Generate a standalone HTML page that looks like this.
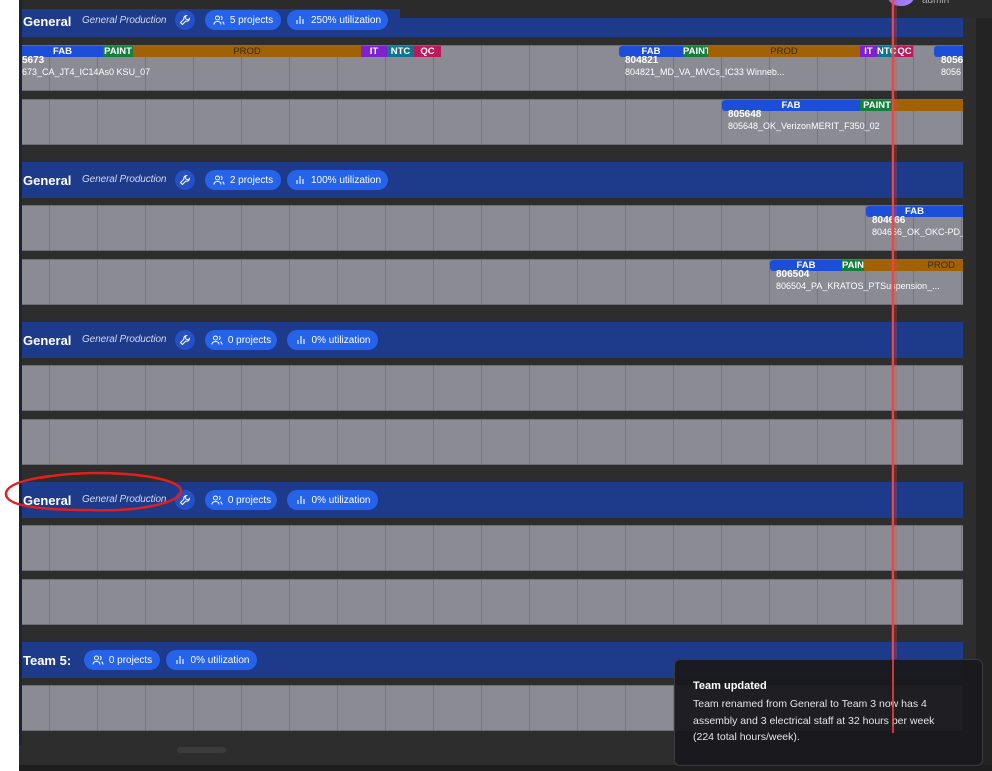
<!DOCTYPE html>
<html><head><style>
*{margin:0;padding:0;box-sizing:border-box}
body{width:992px;height:771px;overflow:hidden;background:#fff;font-family:"Liberation Sans",sans-serif;position:relative}
.a{position:absolute}
#main{left:19px;top:0;width:973px;height:771px;background:#2d2d2d}
.hdr{position:absolute;left:22px;width:941px;background:#1e3a8a;height:36px}
.hdr .t{position:absolute;left:1px;color:#fff;font-weight:bold;font-size:13px;top:11px}
.hdr .s{position:absolute;left:60px;color:#cfd8f0;font-style:italic;font-size:10px;top:12px;letter-spacing:-.1px}
.wr{position:absolute;left:153px;top:8px;width:20px;height:20px;border-radius:50%;background:#2450c8;display:flex;align-items:center;justify-content:center}
.pill{position:absolute;top:8px;height:20px;border-radius:10px;background:#2563eb;color:#fff;font-size:10px;display:flex;align-items:center;justify-content:center;gap:5px}
.lane{position:absolute;left:22px;width:941px;height:46px;background:#8a8b93;border-top:1px solid #6e6f76;border-bottom:1px solid #6e6f76;
background-image:repeating-linear-gradient(90deg,transparent 0 27px,#74757d 27px 28px,transparent 28px 48px)}
.b{position:absolute;top:0;height:11px;font-size:9.5px;font-weight:bold;color:#fff;text-align:center;line-height:11px;overflow:hidden;white-space:nowrap}
.fab{background:#1d4ed8}.pt{background:#15803d}.pr{background:#a16207;color:#3a2a10;font-weight:normal}.it{background:#7e22ce}.nt{background:#0e7490}.qc{background:#be185d}
.id{position:absolute;top:9px;font-size:10px;font-weight:bold;color:#fff;white-space:nowrap}
.nm{position:absolute;top:21px;font-size:9px;color:#fff;white-space:nowrap}
</style></head><body>
<svg width="0" height="0" style="position:absolute"><defs>
<symbol id="u" viewBox="0 0 12 12"><circle cx="4.5" cy="4" r="2" fill="none" stroke="#fff" stroke-width="1"/><path d="M1 10.5c0-2 1.5-3 3.5-3s3.5 1 3.5 3M8 2.2a2 2 0 0 1 0 3.6M9.5 7.8c1 .5 1.5 1.3 1.5 2.7" fill="none" stroke="#fff" stroke-width="1"/></symbol>
<symbol id="c" viewBox="0 0 12 12"><path d="M3 10V6M6 10V2M9 10V5" stroke="#fff" stroke-width="1.1"/></symbol>
<symbol id="w" viewBox="0 0 12 12"><path d="M7.5 1.5a2.8 2.8 0 0 0-2.6 3.7L1.5 8.6l1.9 1.9 3.4-3.4a2.8 2.8 0 0 0 3.7-2.6L9 6 7 5 6 3z" fill="none" stroke="#fff" stroke-width="1"/></symbol>
</defs></svg>
<div class="a" id="main"></div>
<div class="a" style="left:19px;top:0;width:3px;height:745px;background:#1c2438"></div>
<div class="a" style="left:22px;top:0;width:970px;height:18px;background:#2b2b2b"></div>
<div class="a" style="left:888px;top:-12px;width:26px;height:18px;border-radius:50%;background:linear-gradient(135deg,#8b5cf6,#a78bfa)"></div>
<div class="a" style="left:922px;top:-5px;color:#aaa;font-size:10px">admin</div>
<div class="a" style="left:976px;top:18px;width:16px;height:753px;background:#232323"></div>

<!-- Section 1 -->
<div class="hdr" style="top:18px;height:19px"></div>
<div class="hdr" style="top:9px;width:378px;height:28px">
<span class="t" style="top:5px">General</span><span class="s" style="top:6px">General Production</span><div class="wr" style="top:1px"><svg width="12" height="12"><use href="#w"/></svg></div>
<div class="pill" style="left:183px;width:76px;top:1px"><svg width="12" height="12"><use href="#u"/></svg>5 projects</div>
<div class="pill" style="left:265px;width:101px;top:1px"><svg width="12" height="12"><use href="#c"/></svg>250% utilization</div></div>
<div class="lane" style="top:45px">
<div class="b fab" style="left:0;width:81px">FAB</div><div class="b pt" style="left:81px;width:30px">PAINT</div><div class="b pr" style="left:111px;width:228px">PROD</div><div class="b it" style="left:339px;width:26px">IT</div><div class="b nt" style="left:365px;width:27px">NTC</div><div class="b qc" style="left:392px;width:27px">QC</div>
<div class="id" style="left:0">5673</div><div class="nm" style="left:0">673_CA_JT4_IC14As0 KSU_07</div>
<div class="b fab" style="left:597px;width:64px;border-radius:3px 0 0 3px">FAB</div><div class="b pt" style="left:661px;width:25px">PAINT</div><div class="b pr" style="left:686px;width:152px">PROD</div><div class="b it" style="left:838px;width:17px">IT</div><div class="b nt" style="left:855px;width:19px">NTC</div><div class="b qc" style="left:874px;width:17px">QC</div>
<div class="id" style="left:603px">804821</div><div class="nm" style="left:603px">804821_MD_VA_MVCs_IC33 Winneb...</div>
<div class="b fab" style="left:912px;width:29px;border-radius:3px 0 0 3px"></div>
<div class="id" style="left:919px">8056</div><div class="nm" style="left:919px">8056</div>
</div>
<div class="lane" style="top:99px">
<div class="b fab" style="left:700px;width:138px;border-radius:3px 0 0 3px">FAB</div><div class="b pt" style="left:838px;width:34px">PAINT</div><div class="b pr" style="left:872px;width:69px"></div>
<div class="id" style="left:706px">805648</div><div class="nm" style="left:706px">805648_OK_VerizonMERIT_F350_02</div>
</div>

<!-- Section 2 -->
<div class="hdr" style="top:162px"><span class="t">General</span><span class="s">General Production</span><div class="wr"><svg width="12" height="12"><use href="#w"/></svg></div>
<div class="pill" style="left:183px;width:76px"><svg width="12" height="12"><use href="#u"/></svg>2 projects</div><div class="pill" style="left:265px;width:101px"><svg width="12" height="12"><use href="#c"/></svg>100% utilization</div></div>
<div class="lane" style="top:205px">
<div class="b fab" style="left:844px;width:97px;border-radius:3px 0 0 3px">FAB</div>
<div class="id" style="left:850px">804666</div><div class="nm" style="left:850px;width:91px;overflow:hidden">804666_OK_OKC-PD_</div></div>
<div class="lane" style="top:259px">
<div class="b fab" style="left:748px;width:72px;border-radius:3px 0 0 3px">FAB</div><div class="b pt" style="left:820px;width:22px">PAINT</div><div class="b pr" style="left:842px;width:99px;text-align:right;padding-right:8px">PROD</div>
<div class="id" style="left:754px">806504</div><div class="nm" style="left:754px">806504_PA_KRATOS_PTSuspension_...</div></div>

<!-- Section 3 -->
<div class="hdr" style="top:322px"><span class="t">General</span><span class="s">General Production</span><div class="wr"><svg width="12" height="12"><use href="#w"/></svg></div>
<div class="pill" style="left:183px;width:72px"><svg width="12" height="12"><use href="#u"/></svg>0 projects</div><div class="pill" style="left:265px;width:91px"><svg width="12" height="12"><use href="#c"/></svg>0% utilization</div></div>
<div class="lane" style="top:365px"></div><div class="lane" style="top:419px"></div>

<!-- Section 4 -->
<div class="hdr" style="top:482px"><span class="t">General</span><span class="s">General Production</span><div class="wr"><svg width="12" height="12"><use href="#w"/></svg></div>
<div class="pill" style="left:183px;width:72px"><svg width="12" height="12"><use href="#u"/></svg>0 projects</div><div class="pill" style="left:265px;width:91px"><svg width="12" height="12"><use href="#c"/></svg>0% utilization</div></div>
<div class="lane" style="top:525px"></div><div class="lane" style="top:579px"></div>

<!-- Section 5 -->
<div class="hdr" style="top:642px"><span class="t">Team 5:</span>
<div class="pill" style="left:62px;width:76px"><svg width="12" height="12"><use href="#u"/></svg>0 projects</div><div class="pill" style="left:144px;width:91px"><svg width="12" height="12"><use href="#c"/></svg>0% utilization</div></div>
<div class="lane" style="top:685px"></div>
<div class="a" style="left:177px;top:747px;width:49px;height:6px;border-radius:3px;background:#3c3c3c"></div>
<div class="a" style="left:19px;top:765px;width:973px;height:6px;background:#1e1e1e"></div>

<!-- red line -->
<div class="a" style="left:891px;top:0;width:6px;height:732px;background:rgba(239,68,68,.25)"></div>
<div class="a" style="left:892px;top:0;width:2px;height:732px;background:#ef4444"></div>

<!-- toast -->
<div class="a" style="left:674px;top:659px;width:309px;height:107px;background:rgba(26,26,30,.96);border:1px solid #3a3a3e;border-radius:6px;color:#e5e5e5;padding:20px 34px 0 18px">
<div style="font-weight:bold;font-size:11px;color:#fff;margin-bottom:4px">Team updated</div>
<div style="font-size:10.5px;line-height:16.5px">Team renamed from General to Team 3 now has 4 assembly and 3 electrical staff at 32 hours per week (224 total hours/week).</div></div>
<div class="a" style="left:892px;top:659px;width:2px;height:74px;background:#ef4444;opacity:.8"></div>

<svg class="a" style="left:0;top:466px" width="190" height="52"><path d="M40 12 C90 2 170 8 180 22 C188 36 140 46 90 44 C40 44 6 40 6 28 C6 20 20 14 50 10" fill="none" stroke="#e0201c" stroke-width="2.5"/></svg>
</body></html>
